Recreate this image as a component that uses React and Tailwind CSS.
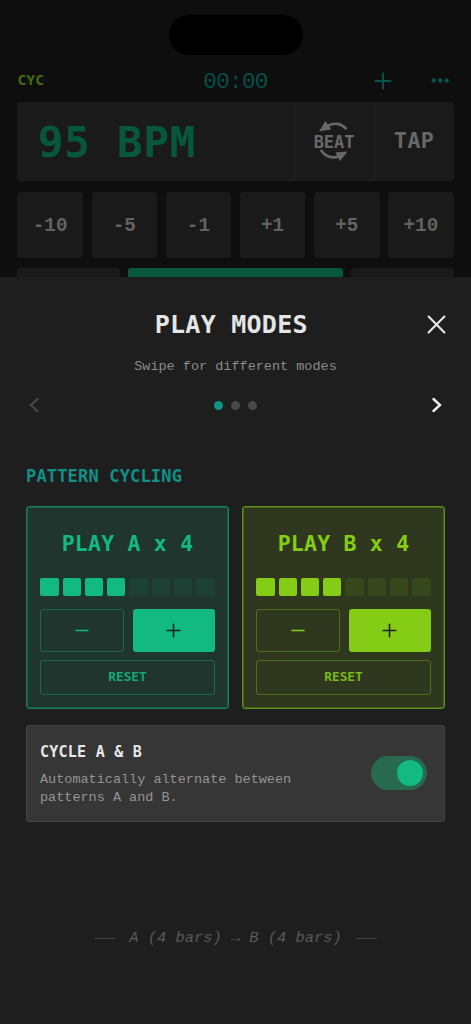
import React from "react";

const SANS_MONO = "font-['DejaVu_Sans_Mono',monospace] whitespace-pre leading-none";
const LIB_MONO = "font-['Liberation_Mono',monospace] whitespace-pre leading-none";

const themes = {
  green: {
    card: "border-[#17825f] bg-[#1f352d] shadow-[inset_0_0_0_1px_#1b5c46]",
    text: "text-[#12b981]",
    reset: "text-[#13a978]",
    on: "bg-[#12b981]",
    off: "bg-[#1d4134]",
    outline: "border-[#1a6a4f]",
  },
  lime: {
    card: "border-[#5f901a] bg-[#2f381e] shadow-[inset_0_0_0_1px_#47641c]",
    text: "text-[#84cc16]",
    reset: "text-[#79b918]",
    on: "bg-[#84cc16]",
    off: "bg-[#36471c]",
    outline: "border-[#4d711b]",
  },
};

function Plus({ className, size = 15, width = 1.6 }) {
  return (
    <svg className={className} width={size} height={size} viewBox="0 0 15 15" fill="none" stroke="currentColor" strokeWidth={width} strokeLinecap="round">
      <path d="M7.5 1.2V13.8M1.2 7.5H13.8" />
    </svg>
  );
}

function PatternCard({ theme, name }) {
  const t = themes[theme];
  return (
    <div className={`flex h-[203px] w-[203px] flex-col rounded-[3px] border px-[13.3px] ${t.card}`}>
      <div className={`mt-[26.5px] text-center text-[21.5px] font-bold tracking-[0.22px] ${SANS_MONO} ${t.text}`}>PLAY {name} x 4</div>
      <div className="mt-[23px] flex justify-between">
        {[0, 1, 2, 3, 4, 5, 6, 7].map((i) => (
          <div key={i} className={`h-[18.3px] w-[18.3px] rounded-[2px] ${i < 4 ? t.on : t.off}`} />
        ))}
      </div>
      <div className="mt-[13.4px] flex h-[43px] gap-[8.5px]">
        <button className={`flex flex-1 items-center justify-center rounded-[3px] border ${t.outline} ${t.text}`}>
          <svg width="14" height="3" viewBox="0 0 14 3" stroke="currentColor" strokeWidth="1.6" strokeLinecap="round">
            <path d="M1 1.5H13" />
          </svg>
        </button>
        <button className={`flex flex-1 items-center justify-center rounded-[3px] text-[#1e1e1e] ${t.on}`}>
          <Plus />
        </button>
      </div>
      <button className={`mt-2 flex h-[35px] items-center justify-center rounded-[3px] border text-[12.8px] font-bold ${SANS_MONO} ${t.outline} ${t.reset}`}>
        RESET
      </button>
    </div>
  );
}

function BeatIcon() {
  return (
    <div className="flex flex-col items-center text-[#686868]">
      <svg width="42" height="13" viewBox="0 0 42 13" fill="none">
        <path d="M15 4.8C21 1.2 28 2.6 32.8 7.4" stroke="currentColor" strokeWidth="2.7" strokeLinecap="round" />
        <path d="M12.4 0L6.2 10.2L18.4 8.6Z" fill="currentColor" />
      </svg>
      <span className={`text-[17px] font-bold ${SANS_MONO}`}>BEAT</span>
      <svg className="-mt-[2px]" width="42" height="13" viewBox="0 0 42 13" fill="none">
        <path d="M8.5 1.8C12.5 7.5 19 9.5 26 7.4" stroke="currentColor" strokeWidth="2.7" strokeLinecap="round" />
        <path d="M22.5 3.4L34.4 2.4L27 12.2Z" fill="currentColor" />
      </svg>
    </div>
  );
}

export default function App() {
  return (
    <div className="flex h-[1024px] w-[471px] flex-col overflow-hidden bg-[#0e0e0e]">
      <div className="flex h-[277px] shrink-0 flex-col overflow-hidden px-[17.4px]">
        <div className="mx-auto mt-[15px] h-[39.5px] w-[134px] shrink-0 rounded-full bg-black" />
        <div className="mt-[11px] grid h-[30px] shrink-0 grid-cols-3 items-center">
          <span className={`text-[14.8px] font-bold text-[#456c0c] ${SANS_MONO}`}>CYC</span>
          <span className={`pt-[3px] text-center text-[22.5px] tracking-[-0.6px] text-[#07504a] ${LIB_MONO}`}>00:00</span>
          <div className="flex items-center justify-end gap-[39px] pr-[3.5px] text-[#07544d]">
            <Plus size={18} width={1.6} />
            <svg width="19" height="5" viewBox="0 0 19 5" fill="currentColor">
              <circle cx="2.7" cy="2.5" r="2.2" />
              <circle cx="9.2" cy="2.5" r="2.2" />
              <circle cx="15.7" cy="2.5" r="2.2" />
            </svg>
          </div>
        </div>
        <div className="mt-[6.5px] flex h-[79px] shrink-0 overflow-hidden rounded-[3px] bg-[#1a1a1a]">
          <div className={`flex flex-1 items-center pl-[20.5px] pt-[4px] text-[42.5px] font-bold tracking-[0.8px] text-[#07573c] ${SANS_MONO}`}>95 BPM</div>
          <div className="flex w-[80px] items-center justify-center border-l border-[#212121]">
            <BeatIcon />
          </div>
          <div className={`flex w-[80px] items-center justify-center border-l border-[#212121] pb-[2px] text-[21.5px] font-bold tracking-[0.4px] text-[#686868] ${SANS_MONO}`}>TAP</div>
        </div>
        <div className="mt-[11px] flex h-[66px] shrink-0 gap-[8.6px]">
          {["-10", "-5", "-1", "+1", "+5", "+10"].map((v) => (
            <button key={v} className={`flex flex-1 items-center justify-center rounded-[3px] bg-[#1a1a1a] pt-[4px] text-[19.3px] font-bold text-[#626262] ${LIB_MONO}`}>{v}</button>
          ))}
        </div>
        <div className="mt-[10px] flex h-[60px] shrink-0 gap-[8.5px]">
          <div className="w-[102.5px] rounded-[3px] bg-[#1a1a1a]" />
          <div className="flex-1 rounded-[3px] bg-[#07573c]" />
          <div className="w-[102.5px] rounded-[3px] bg-[#1a1a1a]" />
        </div>
      </div>

      <div className="flex flex-1 flex-col bg-[#1e1e1e] px-[26px]">
        <div className="mt-[30px] flex h-[34px] items-center justify-between">
          <div className="w-[20px]" />
          <h1 className={`mr-[10.5px] text-[25px] font-bold tracking-[0.25px] text-[#e5e5e5] ${SANS_MONO}`}>PLAY MODES</h1>
          <svg className="-mr-px" width="19" height="19" viewBox="0 0 18 18" fill="none" stroke="#e8e8e8" strokeWidth="2" strokeLinecap="round">
            <path d="M1.5 1.5L16.5 16.5M16.5 1.5L1.5 16.5" />
          </svg>
        </div>
        <p className={`mt-[19px] text-center text-[13.5px] text-[#8b8b8b] ${LIB_MONO}`}>Swipe for different modes</p>
        <div className="mt-[21.5px] flex h-5 items-center justify-between px-[3px]">
          <svg width="10" height="16" viewBox="0 0 10 16" fill="none" stroke="#484848" strokeWidth="2.3" strokeLinecap="round">
            <path d="M8.5 2L2 8L8.5 14" />
          </svg>
          <div className="flex gap-2">
            <div className="h-[9px] w-[9px] rounded-full bg-[#0d9488]" />
            <div className="h-[9px] w-[9px] rounded-full bg-[#484848]" />
            <div className="h-[9px] w-[9px] rounded-full bg-[#484848]" />
          </div>
          <svg width="10" height="16" viewBox="0 0 10 16" fill="none" stroke="#eee" strokeWidth="2.4" strokeLinecap="round">
            <path d="M1.5 2L8 8L1.5 14" />
          </svg>
        </div>
        <h2 className={`mt-[53px] text-[17px] font-bold tracking-[0.17px] text-[#109086] ${SANS_MONO}`}>PATTERN CYCLING</h2>
        <div className="mt-[20.5px] flex justify-between">
          <PatternCard theme="green" name="A" />
          <PatternCard theme="lime" name="B" />
        </div>
        <div className="mt-4 flex h-[97px] items-center justify-between rounded-[3px] border border-[#444] bg-[#363636] pl-[13px] pr-[17px]">
          <div className="pt-[5px]">
            <div className={`text-[15px] font-bold tracking-[0.25px] text-[#e8e8e8] ${SANS_MONO}`}>CYCLE A &amp; B</div>
            <p className="mt-[11px] whitespace-pre font-['Liberation_Mono',monospace] text-[13.5px] leading-[17.5px] text-[#949494]">{"Automatically alternate between\npatterns A and B."}</p>
          </div>
          <div className="flex h-[34px] w-[56px] items-center justify-end rounded-full bg-[#286a51] pr-1">
            <div className="h-[26px] w-[26px] rounded-full bg-[#12b981]" />
          </div>
        </div>
        <div className="mt-[109px] flex items-center justify-center gap-[14px]">
          <div className="h-px w-[21px] bg-[#444]" />
          <span className={`text-[15.4px] italic text-[#5a5a5a] ${LIB_MONO}`}>A (4 bars) → B (4 bars)</span>
          <div className="h-px w-[21px] bg-[#444]" />
        </div>
      </div>
    </div>
  );
}
